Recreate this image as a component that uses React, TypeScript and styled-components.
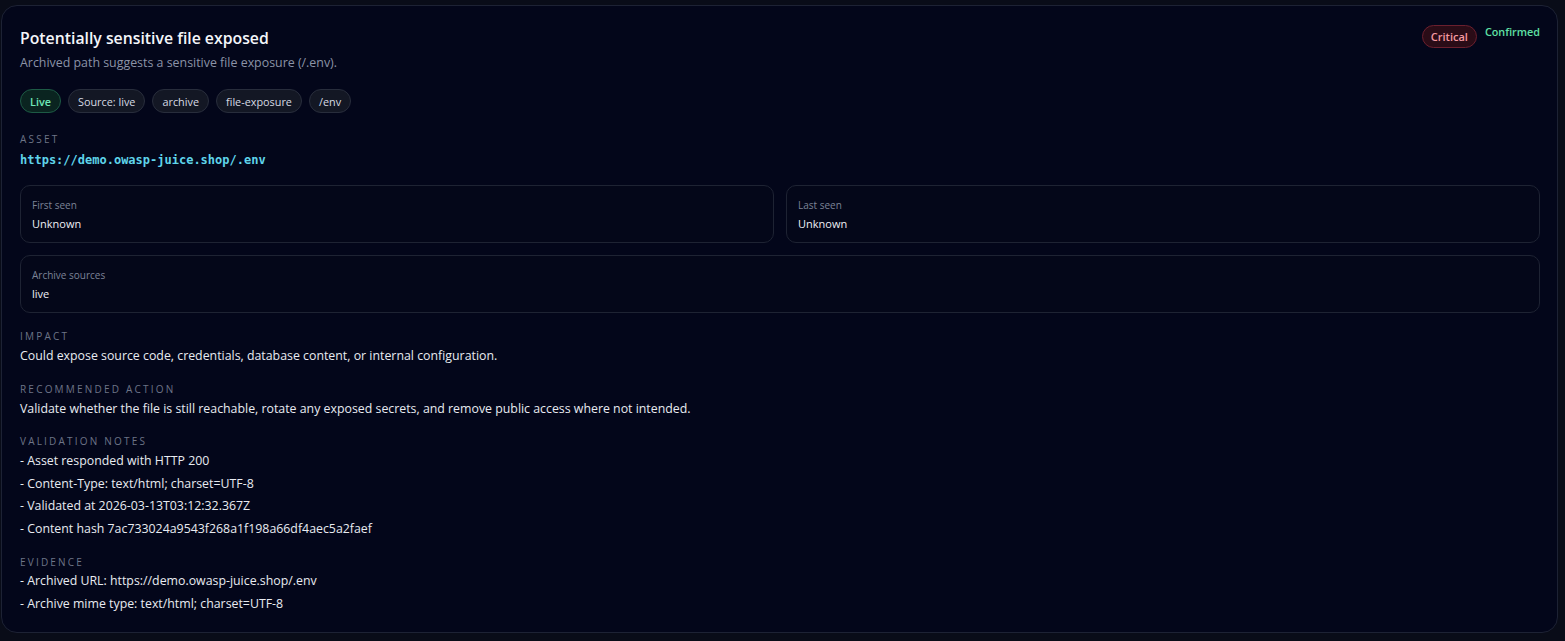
import React from 'react'
import styled, { createGlobalStyle } from 'styled-components'

const GlobalStyle = createGlobalStyle`
  html, body {
    margin: 0;
    padding: 0;
    background: #090c18;
    font-family: 'Segoe UI', 'Open Sans', 'Noto Sans', sans-serif;
    -webkit-font-smoothing: antialiased;
  }
`

const Page = styled.div`
  padding: 5px 7px 9px 1px;
`

const Card = styled.section`
  background: #03061a;
  border: 1px solid #1d2234;
  border-radius: 16px;
  padding: 20px 17px 17px 18px;
  display: flex;
  flex-direction: column;
`

const Header = styled.div`
  display: flex;
  justify-content: space-between;
  align-items: flex-start;
`

const TitleBlock = styled.div`
  display: flex;
  flex-direction: column;
  gap: 3px;
`

const Title = styled.h2`
  margin: 0;
  font-size: 15.8px;
  line-height: 24px;
  font-weight: 600;
  color: #f4f6fa;
`

const Subtitle = styled.p`
  margin: 0;
  font-size: 12.4px;
  line-height: 20px;
  color: #8b93a7;
`

const Status = styled.div`
  display: flex;
  align-items: flex-start;
  gap: 8px;
  margin-top: -1px;
`

const SeverityBadge = styled.span`
  display: inline-flex;
  align-items: center;
  height: 23px;
  box-sizing: border-box;
  padding: 0 8px;
  border-radius: 999px;
  background: #2a0c17;
  border: 1px solid #6b1f2e;
  color: #f59aa2;
  font-size: 11px;
  font-weight: 600;
`

const Confirmed = styled.span`
  font-size: 10.8px;
  line-height: 14px;
  font-weight: 600;
  color: #5fe0a5;
`

const Tags = styled.div`
  display: flex;
  gap: 7px;
  margin-top: 16px;
`

const Tag = styled.span<{ $tone?: 'live' }>`
  display: inline-flex;
  align-items: center;
  box-sizing: border-box;
  height: 24px;
  padding: 0 9px;
  border-radius: 999px;
  font-size: 10.85px;
  font-weight: ${p => (p.$tone === 'live' ? 600 : 400)};
  background: ${p => (p.$tone === 'live' ? '#0a2420' : '#131724')};
  border: 1px solid ${p => (p.$tone === 'live' ? '#1d5a45' : '#282d3c')};
  color: ${p => (p.$tone === 'live' ? '#6ee7b7' : '#d6dae3')};
`

const Section = styled.div<{ $gap?: number }>`
  margin-top: ${p => p.$gap ?? 16}px;
  display: flex;
  flex-direction: column;
`

const Label = styled.div<{ $space?: number }>`
  font-size: 10px;
  line-height: 14px;
  letter-spacing: 0.22em;
  text-transform: uppercase;
  color: #6d7487;
  margin-bottom: ${p => p.$space ?? 3}px;
`

const AssetLink = styled.div`
  font-family: 'DejaVu Sans Mono', 'Liberation Mono', monospace;
  font-size: 12px;
  line-height: 18px;
  font-weight: 700;
  color: #5fd4ea;
`

const Body = styled.div`
  font-size: 12.35px;
  line-height: 20px;
  color: #e8ebf1;
`

const List = styled.ul`
  margin: 0;
  padding: 0;
  list-style: none;
  font-size: 12.35px;
  line-height: 22.5px;
  color: #e8ebf1;
`

const Grid = styled.div`
  display: grid;
  grid-template-columns: 1fr 1fr;
  gap: 12px;
  margin-top: 16px;
`

const InfoBox = styled.div<{ $wide?: boolean }>`
  grid-column: ${p => (p.$wide ? '1 / -1' : 'auto')};
  border: 1px solid #1e2333;
  border-radius: 10px;
  background: #040719;
  padding: 12px 11px 10px;
  display: flex;
  flex-direction: column;
  gap: 4px;
`

const InfoLabel = styled.div`
  font-size: 10px;
  line-height: 14px;
  color: #7c8397;
`

const InfoValue = styled.div`
  font-size: 11px;
  line-height: 16px;
  color: #eef0f5;
`

const tags = ['Source: live', 'archive', 'file-exposure', '/env']

const notes = [
  'Asset responded with HTTP 200',
  'Content-Type: text/html; charset=UTF-8',
  'Validated at 2026-03-13T03:12:32.367Z',
  'Content hash 7ac733024a9543f268a1f198a66df4aec5a2faef',
]

const evidence = [
  'Archived URL: https://demo.owasp-juice.shop/.env',
  'Archive mime type: text/html; charset=UTF-8',
]

export default function App() {
  return (
    <>
      <GlobalStyle />
      <Page>
        <Card>
          <Header>
            <TitleBlock>
              <Title>Potentially sensitive file exposed</Title>
              <Subtitle>Archived path suggests a sensitive file exposure (/.env).</Subtitle>
            </TitleBlock>
            <Status>
              <SeverityBadge>Critical</SeverityBadge>
              <Confirmed>Confirmed</Confirmed>
            </Status>
          </Header>

          <Tags>
            <Tag $tone="live">Live</Tag>
            {tags.map(t => (
              <Tag key={t}>{t}</Tag>
            ))}
          </Tags>

          <Section $gap={19}>
            <Label $space={5}>Asset</Label>
            <AssetLink>https://demo.owasp-juice.shop/.env</AssetLink>
          </Section>

          <Grid>
            <InfoBox>
              <InfoLabel>First seen</InfoLabel>
              <InfoValue>Unknown</InfoValue>
            </InfoBox>
            <InfoBox>
              <InfoLabel>Last seen</InfoLabel>
              <InfoValue>Unknown</InfoValue>
            </InfoBox>
            <InfoBox $wide>
              <InfoLabel>Archive sources</InfoLabel>
              <InfoValue>live</InfoValue>
            </InfoBox>
          </Grid>

          <Section $gap={16}>
            <Label>Impact</Label>
            <Body>Could expose source code, credentials, database content, or internal configuration.</Body>
          </Section>

          <Section>
            <Label>Recommended action</Label>
            <Body>
              Validate whether the file is still reachable, rotate any exposed secrets, and remove public access where not
              intended.
            </Body>
          </Section>

          <Section $gap={15}>
            <Label $space={2}>Validation notes</Label>
            <List>
              {notes.map(n => (
                <li key={n}>- {n}</li>
              ))}
            </List>
          </Section>

          <Section $gap={15}>
            <Label $space={1}>Evidence</Label>
            <List>
              {evidence.map(e => (
                <li key={e}>- {e}</li>
              ))}
            </List>
          </Section>
        </Card>
      </Page>
    </>
  )
}
